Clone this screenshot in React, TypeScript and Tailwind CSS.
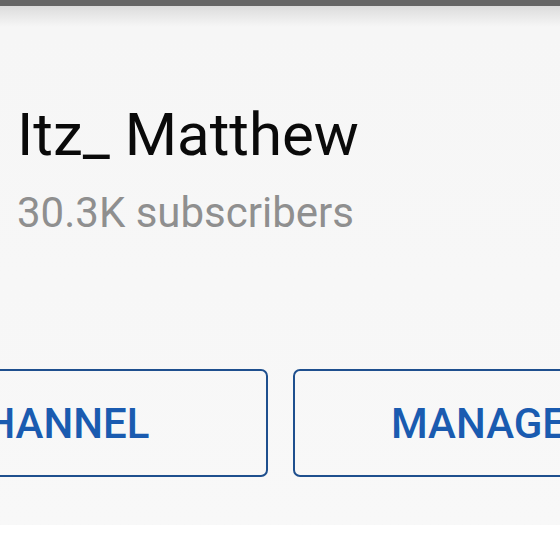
export default function App() {
  return (
    <div className="w-[560px] h-[560px] overflow-hidden bg-white font-['Roboto',sans-serif]">
      {/* status strip + shadow */}
      <div className="h-[6px] bg-[#666666]" />
      <div className="h-[519px] bg-gradient-to-b from-[#dcdcdc] via-[#f6f6f6] via-[4%] to-[#f8f8f8] flex flex-col">
        <div className="pl-[17px] pt-[93px]">
          <h1 className="text-[60px] leading-[72px] text-[#0a0a0a] font-normal">Itz_ Matthew</h1>
          <p className="text-[42px] leading-[48px] mt-[18px] text-[#8f8f8f]">30.3K subscribers</p>
        </div>
        <div className="flex gap-[25px] ml-[-258px] mt-[132px]">
          <button className="shrink-0 w-[526px] h-[108px] rounded-[7px] border-2 border-[#1e4f8e] text-[42px] font-medium text-[#1a5bb0]">
            EDIT CHANNEL
          </button>
          <button className="shrink-0 w-[526px] h-[108px] rounded-[7px] border-2 border-[#1e4f8e] text-[42px] font-medium text-[#1a5bb0]">
            MANAGE VIDEOS
          </button>
        </div>
      </div>
    </div>
  );
}
